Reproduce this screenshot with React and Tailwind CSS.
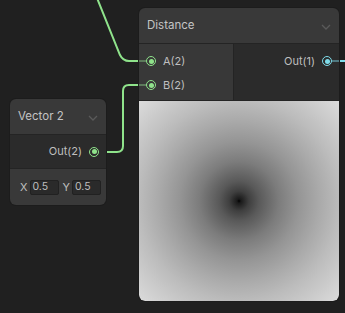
import React from 'react'

const font = { fontFamily: 'Inter, "Noto Sans", sans-serif' }

function Chevron() {
  return (
    <svg width="10" height="6" viewBox="0 0 10 6" className="mt-[2px]">
      <path d="M1 1 L5 5 L9 1" fill="none" stroke="#5a5a5a" strokeWidth="1.3" />
    </svg>
  )
}

function Port({ color, ring }) {
  return (
    <div
      className="w-[10px] h-[10px] rounded-full flex items-center justify-center border-[1.5px]"
      style={{ borderColor: ring }}
    >
      <div className="w-[5px] h-[5px] rounded-full" style={{ backgroundColor: color }} />
    </div>
  )
}

export default function App() {
  return (
    <div className="relative w-[345px] h-[313px] bg-[#202020] overflow-hidden text-[11px] text-[#bfbfbf]" style={font}>
      {/* wires */}
      <svg className="absolute inset-0" width="345" height="313">
        <path d="M97,-2 L120,55 Q123,61 129,61 L140,61" fill="none" stroke="#8fe38b" strokeWidth="2" />
        <path d="M99,152 L117,152 Q123,152 123,146 L123,91 Q123,85 129,85 L140,85" fill="none" stroke="#8fe38b" strokeWidth="2" />
        <path d="M338,61 L346,61" fill="none" stroke="#7fdcea" strokeWidth="2" />
      </svg>

      {/* Distance node */}
      <div className="absolute left-[139px] top-[8px] w-[200px] rounded-[6px] bg-[#393939] overflow-hidden shadow-[0_0_0_1px_#1c1c1c]">
        <div className="h-[36px] flex items-center justify-between pl-[8px] pr-[8px] border-b border-[#242424]">
          <span className="text-[11.5px] text-[#c4c4c4]">Distance</span>
          <Chevron />
        </div>
        <div className="h-[57px] flex border-b border-[#242424]">
          <div className="w-[94px] bg-[#383838] pt-[5px]">
            {['A(2)', 'B(2)'].map(l => (
              <div key={l} className="h-[24px] flex items-center">
                <div className="w-[7px] h-[2px] bg-[#5c7a5b]" />
                <Port color="#8fe38b" ring="#8fe38b" />
                <span className="ml-[7px]">{l}</span>
              </div>
            ))}
          </div>
          <div className="flex-1 bg-[#2b2b2b] border-l border-[#242424] pt-[5px]">
            <div className="h-[24px] flex items-center justify-end">
              <span className="mr-[7px]">Out(1)</span>
              <Port color="#7fdcea" ring="#7fdcea" />
              <div className="w-[7px] h-[2px] bg-[#4f7880]" />
            </div>
          </div>
        </div>
        <div className="h-[200px] rounded-b-[6px] bg-[radial-gradient(circle_farthest-corner_at_50%_50%,#000_0%,#1a1a1a_1.4%,#3f3f3f_7%,#595959_14%,#7c7c7c_28%,#959595_42%,#aaaaaa_57%,#bcbcbc_71%,#cbcbcb_85%,#dbdbdb_100%)]" />
      </div>

      {/* Vector 2 node */}
      <div className="absolute left-[10px] top-[99px] w-[96px] rounded-[6px] bg-[#393939] overflow-hidden shadow-[0_0_0_1px_#1c1c1c]">
        <div className="h-[36px] flex items-center justify-between pl-[8px] pr-[8px] border-b border-[#242424]">
          <span className="text-[11.5px] text-[#c4c4c4]">Vector 2</span>
          <Chevron />
        </div>
        <div className="h-[34px] bg-[#2b2b2b] flex items-center justify-end pr-[7px] border-b border-[#242424]">
          <span className="mr-[7px]">Out(2)</span>
          <Port color="#8fe38b" ring="#8fe38b" />
        </div>
        <div className="h-[36px] flex items-center pl-[10px] gap-[2px]">
          <span>X</span>
          <div className="w-[29px] h-[15px] bg-[#2a2a2a] border border-[#212121] rounded-[2px] flex items-center pl-[2px] text-[10.5px]">0.5</div>
          <span className="ml-[2px]">Y</span>
          <div className="w-[29px] h-[15px] bg-[#2a2a2a] border border-[#212121] rounded-[2px] flex items-center pl-[2px] text-[10.5px]">0.5</div>
        </div>
      </div>
    </div>
  )
}
